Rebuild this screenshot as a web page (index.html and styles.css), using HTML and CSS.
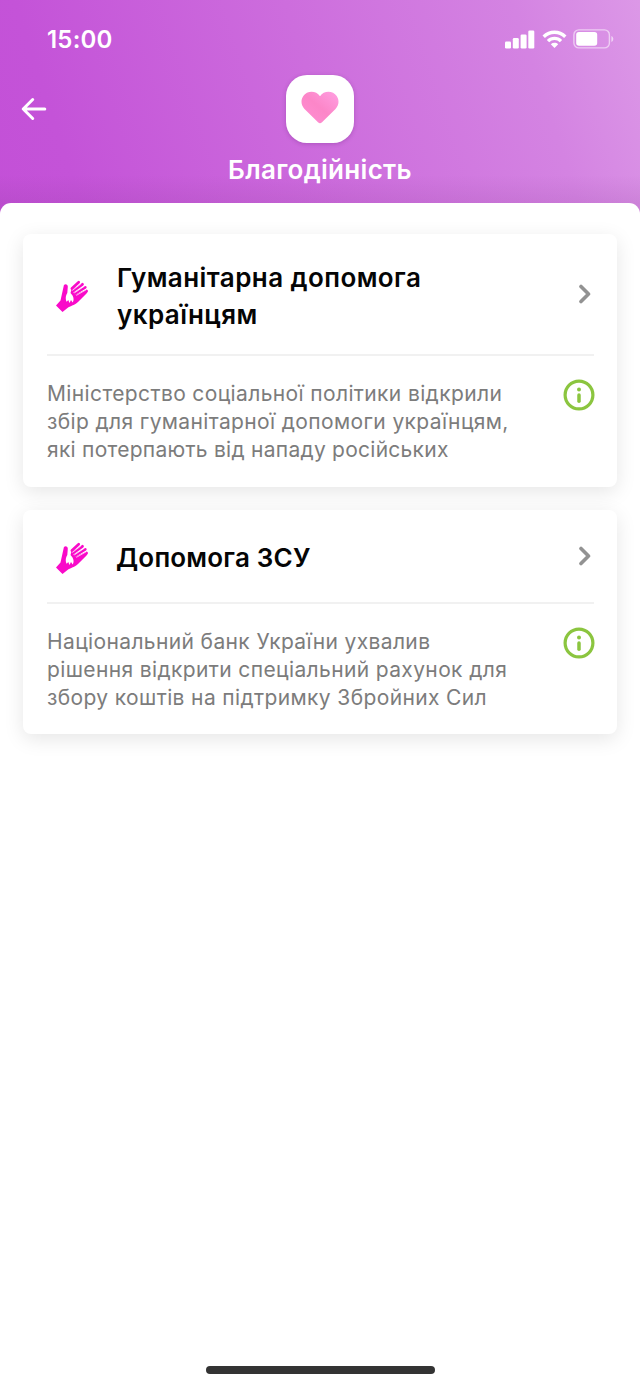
FILE: index.html
```html
<!DOCTYPE html>
<html lang="uk">
<head>
<meta charset="utf-8">
<meta name="viewport" content="width=device-width">
<title>Благодійність</title>
<link rel="stylesheet" href="styles.css">
</head>
<body>
<svg class="symbols" width="0" height="0" aria-hidden="true">
  <symbol id="hand" viewBox="0 0 32 32">
    <path class="hand-fill" d="M7.600 6.500C7.600 3.400 12 3.500 11.800 6.800L11.300 13C9.300 16 9.500 20 10.700 21.700L12.300 20L13.500 23L15 20L16.700 22.500C18.500 19.500 17.500 16 14.500 13L15.500 9.500L19 15L31 9.500C32 10.500 31.500 12.500 30.300 13.800L22 22C18 25.500 14 26 11.500 28L6.500 32L0 25.500L4.500 20.500Z"/>
    <path class="hand-fingers" d="M15.900 8.500L22.700 2.200M17 11.200L26.500 4.300M19 13.700L29.300 7.300M21 16.200L30.500 11.200"/>
    <path class="hand-gaps" d="M16.300 10.500L24.800 4M18.500 12.900L28.300 6.300M20.300 15.400L30.300 9.700"/>
  </symbol>
  <symbol id="chevron" viewBox="0 0 14 20">
    <path class="chevron-line" d="M3 2.500L10.500 10L3 17.500"/>
  </symbol>
  <symbol id="info" viewBox="0 0 32 32">
    <circle class="info-ring" cx="16" cy="16" r="13.900"/>
    <circle class="info-dot" cx="16" cy="10.500" r="2"/>
    <path class="info-stem" d="M16 16V22.300"/>
  </symbol>
</svg>
<div class="screen">
  <header class="header">
    <div class="status">
      <span class="time">15:00</span>
      <div class="indicators">
        <svg class="signal" viewBox="0 0 30 19"><rect x="0" y="11.500" width="6" height="7" rx="1.300"/><rect x="7.800" y="8" width="6" height="10.500" rx="1.300"/><rect x="15.600" y="4.500" width="6" height="14" rx="1.300"/><rect x="23.300" y="0.500" width="6" height="18" rx="1.300"/></svg>
        <svg class="wifi" viewBox="0 0 25 19"><path class="wifi-arc" d="M1.700 6.700C7.800 .8 17.200 .8 23.300 6.700M6 11.100C9.700 7.500 15.300 7.500 19 11.100"/><path class="wifi-dot" d="M8.800 14.200C11 12.300 14 12.300 16.200 14.200L12.500 18Z"/></svg>
        <svg class="battery" viewBox="0 0 42 20"><rect class="battery-case" x=".9" y=".9" width="35.500" height="18" rx="5"/><rect class="battery-level" x="3.200" y="3" width="21" height="13.800" rx="2.800"/><path class="battery-tip" d="M38.400 7V13C40.900 12 40.900 8 38.400 7Z"/></svg>
      </div>
    </div>
    <div class="nav">
      <svg class="back" viewBox="0 0 26 24"><path d="M11.700 2.500L2.200 12L11.700 21.500M2.500 12H23.800"/></svg>
      <div class="badge">
        <svg class="heart" viewBox="0 0 38 34">
          <defs><linearGradient id="heartFill" x1="0" y1="1" x2="1" y2="0"><stop offset="0" stop-color="#ff8fd4"/><stop offset=".5" stop-color="#fc86c8"/><stop offset="1" stop-color="#ffa0e2"/></linearGradient></defs>
          <path fill="url(#heartFill)" d="M19 5.200C23 -.8 32 -.5 35.700 5C38.500 9.200 38 14.500 34.500 18L21 31.200Q19 33.200 17 31.200L3.500 18C0 14.500 -.5 9.200 2.300 5C6 -.5 15 -.8 19 5.200Z"/>
        </svg>
      </div>
    </div>
    <h1 class="page-title">Благодійність</h1>
  </header>
  <main class="sheet">
    <article class="card">
      <div class="card-head card-head-tall">
        <svg class="hand"><use href="#hand"/></svg>
        <h2 class="card-title">Гуманітарна допомога<br>українцям</h2>
        <svg class="chevron"><use href="#chevron"/></svg>
      </div>
      <div class="card-body">
        <p class="description">Міністерство соціальної політики відкрили<br>збір для гуманітарної допомоги українцям,<br><span class="snug">які потерпають від нападу російських</span></p>
        <svg class="info"><use href="#info"/></svg>
      </div>
    </article>
    <article class="card">
      <div class="card-head">
        <svg class="hand"><use href="#hand"/></svg>
        <h2 class="card-title card-title-short">Допомога ЗСУ</h2>
        <svg class="chevron"><use href="#chevron"/></svg>
      </div>
      <div class="card-body">
        <p class="description">Національний банк України ухвалив<br>рішення відкрити спеціальний рахунок для<br>збору коштів на підтримку Збройних Сил</p>
        <svg class="info"><use href="#info"/></svg>
      </div>
    </article>
  </main>
  <footer class="home"><div class="home-bar"></div></footer>
</div>
</body>
</html>
```
FILE: styles.css
```css
* { box-sizing: border-box; }
body { margin: 0; font-family: Inter, "Noto Sans", sans-serif; background: #fff; }
h1, h2, p { margin: 0; }
svg { display: block; flex: none; }
.symbols { display: none; }
.screen { width: 640px; height: 1386px; display: flex; flex-direction: column; overflow: hidden; }

.header {
  height: 218px;
  flex: none;
  color: #fff;
  background:
    linear-gradient(to bottom, transparent 175px, rgba(120, 50, 130, .12) 204px),
    linear-gradient(72deg, #c350d7 0%, #c453d8 12%, #cd6ddd 50%, #d483e2 82%, #dc98e7 100%);
}
.status { height: 75px; padding: 4px 25px 0 48px; display: flex; justify-content: space-between; align-items: center; }
.time { margin-left: -1px; font-size: 24px; line-height: 30px; font-weight: 600; letter-spacing: .2px; }
.indicators { margin-top: -1px; display: flex; align-items: center; gap: 6.500px; fill: #fff; }
.signal { width: 30px; height: 19px; }
.wifi { width: 25px; height: 19px; }
.wifi-arc { fill: none; stroke: #fff; stroke-width: 3.4; }
.battery { width: 42px; height: 20px; }
.battery-case { fill: none; stroke: #fff; stroke-opacity: .55; stroke-width: 1.4; }
.battery-tip { opacity: .6; }

.nav { height: 68px; display: grid; grid-template-columns: 1fr 68px 1fr; align-items: center; padding: 0 21px; }
.back { width: 26px; height: 24px; }
.back path { fill: none; stroke: #fff; stroke-width: 3; stroke-linecap: round; stroke-linejoin: round; }
.badge { width: 68px; height: 68px; border-radius: 21px; background: #fff; display: flex; align-items: center; justify-content: center; box-shadow: 0 1px 4px rgba(100, 30, 120, .3); }
.heart { width: 38px; height: 34px; margin-bottom: 2px; }
.page-title { margin-top: 10px; text-align: center; font-size: 26px; line-height: 34px; font-weight: 600; letter-spacing: .3px; }

.sheet { position: relative; flex: 1; margin-top: -15px; padding: 31px 23px 0; border-radius: 11px 11px 0 0; background: #fff; display: flex; flex-direction: column; gap: 23px; }
.card { padding: 0 23px 23px 24px; border-radius: 8px; background: #fff; box-shadow: 0 5px 20px rgba(0, 0, 0, .1); }
.card-head { height: 94px; padding: 0 0 0 7px; display: flex; align-items: center; border-bottom: 2px solid #f1f1f1; }
.card-head-tall { height: 122px; }
.hand { width: 36px; height: 32px; margin-top: 3px; }
.card-title { flex: 1; margin-left: 27px; padding-top: 4px; color: #050505; font-size: 26px; line-height: 37px; font-weight: 600; letter-spacing: .43px; white-space: nowrap; }
.card-title-short { margin-left: 26px; padding-top: 2px; letter-spacing: .2px; }
.hand-fill { fill: #f90ac9; }
.hand-fingers { fill: none; stroke: #f90ac9; stroke-width: 2.7; stroke-linecap: round; }
.hand-gaps { fill: none; stroke: #fff; stroke-width: .7; }
.chevron { width: 14px; height: 20px; margin-right: 2px; }
.chevron-line { fill: none; stroke: #929292; stroke-width: 3.6; stroke-linecap: round; stroke-linejoin: round; }
.card-body { padding-top: 24px; height: 108px; display: flex; justify-content: space-between; }
.card-head:not(.card-head-tall) + .card-body { height: 107px; }
.description { color: #7c7c7c; font-size: 21px; line-height: 28px; letter-spacing: .37px; white-space: nowrap; }
.snug { letter-spacing: .26px; }
.info { width: 32px; height: 32px; margin-top: -1px; margin-right: -1px; }
.info-ring { fill: none; stroke: #8bc53f; stroke-width: 3.2; }
.info-dot { fill: #8bc53f; }
.info-stem { stroke: #8bc53f; stroke-width: 3.5; stroke-linecap: round; }
.home { height: 20px; flex: none; background: #fff; display: flex; justify-content: center; align-items: flex-start; }
.home-bar { width: 229px; height: 8px; border-radius: 4px; background: #333; }
```
